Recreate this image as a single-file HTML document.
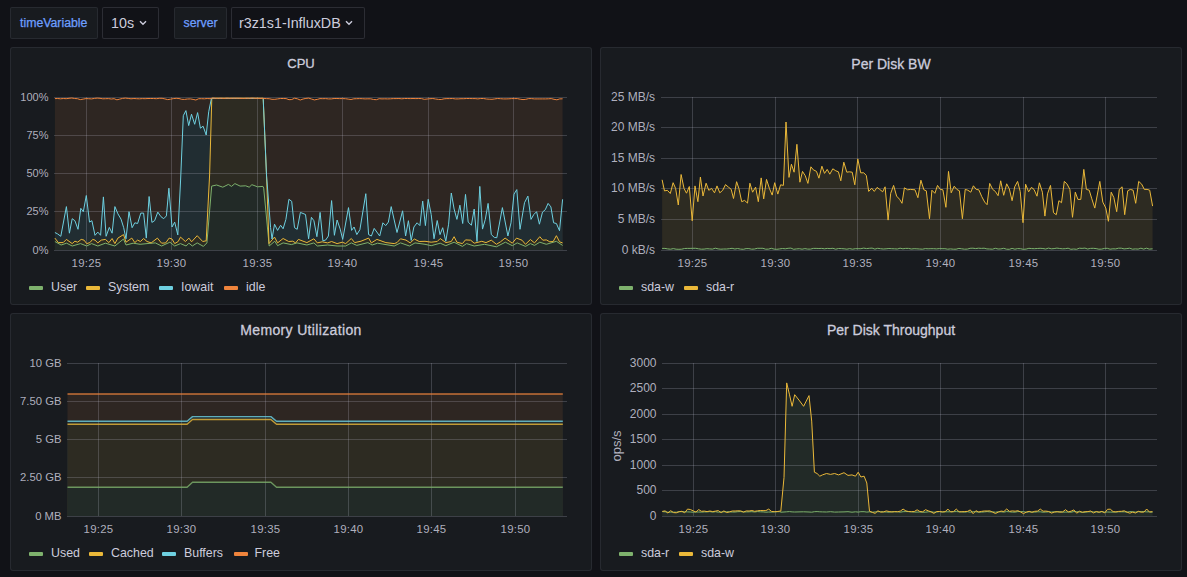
<!DOCTYPE html>
<html><head><meta charset="utf-8"><style>
html,body{margin:0;padding:0;background:#111217;width:1187px;height:577px;overflow:hidden;font-family:"Liberation Sans", sans-serif;}
.abs{position:absolute;}
.lbl{position:absolute;top:7px;height:30px;background:#181b1f;border:1px solid rgba(204,204,220,0.09);border-radius:2px;color:#6e9fff;font-weight:normal;font-size:12.3px;-webkit-text-stroke:0.25px #6e9fff;line-height:30px;box-sizing:content-box;}
.val{position:absolute;top:7px;height:30px;background:#111217;border:1px solid rgba(204,204,220,0.15);border-radius:2px;color:#ccccdc;font-size:14.3px;line-height:30px;}
.panel{position:absolute;background:#181b1f;border:1px solid rgba(204,204,220,0.09);border-radius:3px;box-sizing:border-box;}
.title{position:absolute;color:#ccccdc;font-weight:normal;font-size:14px;-webkit-text-stroke:0.3px #ccccdc;line-height:16px;text-align:center;white-space:nowrap;}
.yl{position:absolute;color:rgba(204,204,220,0.85);font-size:12px;line-height:16px;text-align:right;white-space:nowrap;}
.xl{position:absolute;width:60px;color:rgba(204,204,220,0.85);font-size:11.4px;letter-spacing:0.25px;line-height:16px;text-align:center;white-space:nowrap;}
.lm{position:absolute;width:14px;height:4px;border-radius:1px;}
.lt{position:absolute;color:#ccccdc;font-size:12.4px;line-height:16px;white-space:nowrap;}
svg{position:absolute;left:0;top:0;}
.chev{position:absolute;}
</style></head><body>
<div class="lbl" style="left:10px;width:86px;"><span style="position:absolute;left:9px">timeVariable</span></div>
<div class="val" style="left:102px;width:55px;"><span style="position:absolute;left:8px">10s</span>
<svg class="chev" style="left:36px;top:12px" width="8" height="6" viewBox="0 0 8 6"><path d="M1 1.2 L4 4.2 L7 1.2" fill="none" stroke="#ccccdc" stroke-width="1.4"/></svg></div>
<div class="lbl" style="left:174px;width:51px;"><span style="position:absolute;left:8.5px">server</span></div>
<div class="val" style="left:231px;width:132px;"><span style="position:absolute;left:7px">r3z1s1-InfluxDB</span>
<svg class="chev" style="left:113px;top:12px" width="8" height="6" viewBox="0 0 8 6"><path d="M1 1.2 L4 4.2 L7 1.2" fill="none" stroke="#ccccdc" stroke-width="1.4"/></svg></div>

<div class="panel" style="left:10px;top:47px;width:582px;height:258px"></div>
<div class="panel" style="left:600px;top:47px;width:582px;height:258px"></div>
<div class="panel" style="left:10px;top:313px;width:582px;height:258px"></div>
<div class="panel" style="left:600px;top:313px;width:582px;height:258px"></div>

<div class="title" style="left:10px;width:582px;top:55.7px;font-size:13px">CPU</div>
<div class="title" style="left:600px;width:582px;top:55.7px">Per Disk BW</div>
<div class="title" style="left:10px;width:582px;top:321.7px;letter-spacing:0.35px">Memory Utilization</div>
<div class="title" style="left:600px;width:582px;top:321.7px">Per Disk Throughput</div>

<svg width="1187" height="577" viewBox="0 0 1187 577"><polygon points="54.9,250.0 54.9,98.6 57.7,98.5 60.5,98.8 63.4,98.5 66.2,98.7 69.0,98.3 71.8,98.0 74.6,98.5 77.5,98.7 80.3,99.6 83.1,99.1 85.9,98.6 88.7,98.7 91.6,98.9 94.4,98.4 97.2,98.1 100.0,98.3 102.8,98.8 105.7,98.7 108.5,98.6 111.3,99.0 114.1,98.7 116.9,99.8 119.8,99.1 122.6,98.4 125.4,98.1 128.2,98.4 131.0,98.8 133.9,98.5 136.7,98.7 139.5,98.8 142.3,98.6 145.1,98.7 148.0,98.5 150.8,98.5 153.6,98.5 156.4,98.7 159.2,98.3 162.1,98.3 164.9,98.9 167.7,99.6 170.5,99.2 173.3,98.6 176.2,98.3 179.0,98.5 181.8,99.3 184.6,99.4 187.4,99.0 190.3,98.9 193.1,99.4 195.9,100.0 198.7,98.7 201.5,98.7 204.4,98.8 207.2,98.5 210.0,98.7 212.8,98.1 215.6,98.4 218.5,98.4 221.3,98.3 224.1,98.5 226.9,98.2 229.7,98.4 232.6,98.3 235.4,98.3 238.2,98.3 241.0,98.4 243.8,98.5 246.7,98.3 249.5,98.4 252.3,98.1 255.1,98.4 257.9,98.4 260.8,98.5 263.6,98.4 266.4,98.6 269.2,98.7 272.0,99.3 274.9,99.3 277.7,98.9 280.5,98.5 283.3,98.5 286.1,98.6 289.0,99.7 291.8,99.5 294.6,98.2 297.4,98.8 300.2,100.0 303.1,99.0 305.9,98.4 308.7,98.1 311.5,99.0 314.3,99.9 317.2,99.4 320.0,98.6 322.8,98.7 325.6,98.6 328.4,98.9 331.3,98.9 334.1,98.5 336.9,98.5 339.7,98.6 342.5,98.6 345.4,98.7 348.2,99.1 351.0,99.5 353.8,98.8 356.6,98.7 359.5,98.6 362.3,98.7 365.1,98.9 367.9,98.8 370.7,98.8 373.6,99.5 376.4,99.7 379.2,98.7 382.0,98.9 384.8,98.8 387.7,98.9 390.5,98.8 393.3,98.6 396.1,98.6 398.9,98.5 401.8,98.8 404.6,98.5 407.4,98.5 410.2,98.6 413.0,98.5 415.9,98.6 418.7,98.5 421.5,98.6 424.3,99.3 427.1,99.0 430.0,98.7 432.8,98.5 435.6,99.0 438.4,99.4 441.2,99.5 444.1,98.8 446.9,98.6 449.7,98.6 452.5,98.5 455.3,98.9 458.2,98.9 461.0,98.7 463.8,98.7 466.6,98.5 469.4,98.5 472.3,98.6 475.1,98.6 477.9,98.9 480.7,98.5 483.5,98.5 486.4,99.0 489.2,99.2 492.0,99.3 494.8,98.9 497.6,98.5 500.5,98.7 503.3,98.9 506.1,98.9 508.9,98.8 511.7,98.6 514.6,98.6 517.4,98.6 520.2,99.2 523.0,99.6 525.8,99.3 528.7,98.6 531.5,98.6 534.3,98.9 537.1,98.9 539.9,98.9 542.8,98.9 545.6,98.9 548.4,98.8 551.2,98.6 554.0,99.3 556.9,99.8 559.7,98.9 562.6,98.8 562.6,250.0" fill="#2e2622"/><polygon points="54.9,250.0 54.9,232.5 57.6,233.9 60.8,236.3 66.4,206.6 69.4,233.2 72.2,218.7 74.9,220.7 78.0,229.3 80.8,208.3 83.3,211.7 86.3,195.5 89.5,222.1 91.9,220.7 95.0,235.3 97.8,232.1 100.6,235.3 103.4,196.9 106.1,236.3 109.3,227.4 112.1,233.2 114.9,206.6 117.9,213.8 121.0,219.1 123.7,227.7 126.0,238.8 129.0,211.7 132.1,227.7 134.8,222.8 137.6,223.5 140.8,213.1 143.6,213.1 146.3,238.1 149.1,196.5 151.9,222.4 154.6,220.7 157.8,212.1 160.9,216.6 163.7,218.7 166.4,215.9 168.9,188.2 172.0,227.0 174.7,222.1 177.8,234.9 180.6,180.0 183.3,115.7 185.9,110.6 188.7,125.6 191.5,114.2 194.7,124.3 197.6,112.6 200.4,128.2 203.1,126.2 206.2,135.0 208.7,111.8 211.4,98.5 263.2,98.5 266.5,175.0 270.6,227.7 272.0,239.0 274.5,224.2 277.6,230.4 280.6,225.2 283.1,228.8 285.9,219.4 288.9,199.3 291.7,201.3 294.5,227.7 297.2,229.3 300.4,212.4 305.5,214.5 308.6,238.8 311.4,217.3 313.9,220.7 316.9,236.7 320.1,212.4 322.9,240.8 325.6,240.1 328.4,236.0 331.6,200.6 334.4,235.3 337.1,220.0 340.2,229.1 342.7,239.4 348.5,207.6 351.6,230.4 354.1,227.0 356.8,234.6 359.9,229.7 365.8,193.7 368.6,234.6 371.4,236.0 374.2,228.4 379.7,236.0 382.9,222.8 385.7,225.6 388.4,222.1 391.2,206.6 397.0,232.5 402.6,210.8 405.6,236.0 408.4,220.7 411.2,240.4 413.9,227.0 417.1,222.8 419.9,225.6 422.7,201.1 425.4,225.6 428.2,199.3 431.2,214.5 434.0,238.8 437.2,220.5 440.0,234.6 442.7,227.7 445.8,241.3 448.6,224.2 451.3,193.0 454.1,209.0 456.9,219.4 459.9,205.2 462.7,223.5 465.5,194.4 468.2,222.1 471.4,225.2 474.2,209.0 477.0,241.5 479.8,186.4 482.5,229.1 485.3,219.4 488.1,203.4 491.3,234.6 494.3,237.4 496.8,237.7 502.4,207.6 507.9,236.0 511.0,222.8 514.0,194.1 516.8,189.6 520.0,229.3 524.5,202.7 527.9,196.1 531.0,219.4 533.8,214.5 536.6,211.7 539.4,224.2 542.5,212.1 545.3,209.7 548.1,203.4 550.9,206.9 553.6,222.8 556.4,223.5 559.5,230.7 562.6,199.3 562.6,250.0" fill="#212d32"/><polygon points="54.9,250.0 54.9,238.1 58.3,242.6 63.2,242.6 66.4,239.4 72.2,243.6 74.9,241.2 77.7,242.2 81.2,239.4 84.0,240.1 86.7,243.6 89.9,242.6 92.7,239.4 95.0,240.1 97.8,242.9 101.3,240.1 105.4,239.4 108.9,242.6 112.1,238.5 114.9,243.6 117.9,238.1 123.5,234.6 126.0,242.2 131.8,238.1 134.8,242.6 137.6,240.1 140.4,241.5 143.6,238.5 147.0,241.5 151.2,242.9 157.4,238.1 161.6,243.2 165.7,242.9 169.2,238.1 172.0,239.0 174.7,243.6 178.2,241.5 180.5,237.1 185.4,241.5 188.9,238.1 191.6,241.8 197.2,235.7 202.7,241.5 206.2,240.8 209.6,175.0 211.8,98.2 263.2,98.2 266.5,175.0 269.0,243.6 274.5,237.1 277.6,242.9 283.1,238.5 288.7,241.5 292.8,241.2 295.6,242.9 298.4,239.4 306.9,242.6 313.9,238.8 317.3,242.9 322.2,241.8 327.7,242.9 331.6,241.5 337.1,243.6 342.3,242.2 345.7,243.6 351.3,238.5 354.7,242.6 361.0,241.2 368.6,238.1 371.4,242.9 376.9,239.4 385.9,242.6 394.2,243.6 397.0,242.6 400.5,238.8 406.0,240.1 410.2,242.9 414.3,239.0 419.2,241.5 425.0,241.3 431.2,242.2 437.2,241.5 440.2,238.5 445.8,242.6 451.3,241.5 454.1,236.7 456.9,242.2 462.4,243.6 465.5,239.9 470.7,240.2 474.2,243.2 481.8,241.3 486.0,242.6 491.3,240.2 496.4,244.3 500.5,241.8 505.1,238.1 512.3,243.2 516.5,238.1 522.0,240.2 525.5,244.3 530.4,239.5 534.5,242.9 539.8,236.7 542.8,240.2 546.3,239.9 549.8,241.8 553.2,241.5 556.4,235.7 559.5,241.8 562.6,242.9 562.6,250.0" fill="#2d2b22"/><polygon points="54.9,250.0 54.9,241.5 61.1,245.0 66.6,243.2 72.2,246.0 80.5,243.6 86.7,246.0 91.6,243.6 97.8,246.0 105.4,243.2 114.9,246.0 123.5,239.0 126.0,245.0 133.2,243.2 140.1,244.3 147.0,243.6 155.3,242.9 161.6,246.0 169.9,242.2 174.7,246.0 180.5,243.6 186.1,246.0 188.9,243.2 192.3,246.0 197.2,242.9 203.4,246.4 206.9,242.9 211.7,186.1 216.6,185.0 222.8,187.2 228.4,184.4 231.5,186.4 234.9,183.6 240.1,186.1 245.7,185.8 249.2,187.2 251.9,184.7 257.5,186.8 263.0,186.4 263.7,188.2 269.2,246.0 274.8,241.2 277.6,245.7 283.1,242.9 291.4,244.6 297.0,242.9 306.9,245.0 313.9,242.9 317.3,246.0 327.7,245.0 337.1,246.0 345.7,246.0 351.3,242.9 356.8,245.4 367.9,242.6 372.1,245.0 377.6,243.2 394.2,246.0 400.5,242.9 409.5,246.0 415.0,242.9 425.0,244.3 431.2,245.7 440.2,243.2 445.8,245.7 454.1,242.2 462.4,246.4 466.6,243.6 474.2,246.0 484.6,244.3 496.4,246.8 505.4,242.2 512.3,245.7 517.2,242.9 525.5,246.4 530.4,243.6 534.5,245.4 539.8,242.2 546.3,244.3 556.4,241.3 562.6,245.4 562.6,250.0" fill="#222a27"/><line x1="54" y1="97.5" x2="567" y2="97.5" stroke="rgba(204,204,220,0.21)" stroke-width="1"/><line x1="54" y1="135.5" x2="567" y2="135.5" stroke="rgba(204,204,220,0.21)" stroke-width="1"/><line x1="54" y1="173.5" x2="567" y2="173.5" stroke="rgba(204,204,220,0.21)" stroke-width="1"/><line x1="54" y1="211.5" x2="567" y2="211.5" stroke="rgba(204,204,220,0.21)" stroke-width="1"/><line x1="54" y1="250.5" x2="567" y2="250.5" stroke="rgba(204,204,220,0.21)" stroke-width="1"/><line x1="86.5" y1="97" x2="86.5" y2="250" stroke="rgba(204,204,220,0.21)" stroke-width="1"/><line x1="171.5" y1="97" x2="171.5" y2="250" stroke="rgba(204,204,220,0.21)" stroke-width="1"/><line x1="257.5" y1="97" x2="257.5" y2="250" stroke="rgba(204,204,220,0.21)" stroke-width="1"/><line x1="342.5" y1="97" x2="342.5" y2="250" stroke="rgba(204,204,220,0.21)" stroke-width="1"/><line x1="428.5" y1="97" x2="428.5" y2="250" stroke="rgba(204,204,220,0.21)" stroke-width="1"/><line x1="513.5" y1="97" x2="513.5" y2="250" stroke="rgba(204,204,220,0.21)" stroke-width="1"/><polyline points="54.9,241.5 61.1,245.0 66.6,243.2 72.2,246.0 80.5,243.6 86.7,246.0 91.6,243.6 97.8,246.0 105.4,243.2 114.9,246.0 123.5,239.0 126.0,245.0 133.2,243.2 140.1,244.3 147.0,243.6 155.3,242.9 161.6,246.0 169.9,242.2 174.7,246.0 180.5,243.6 186.1,246.0 188.9,243.2 192.3,246.0 197.2,242.9 203.4,246.4 206.9,242.9 211.7,186.1 216.6,185.0 222.8,187.2 228.4,184.4 231.5,186.4 234.9,183.6 240.1,186.1 245.7,185.8 249.2,187.2 251.9,184.7 257.5,186.8 263.0,186.4 263.7,188.2 269.2,246.0 274.8,241.2 277.6,245.7 283.1,242.9 291.4,244.6 297.0,242.9 306.9,245.0 313.9,242.9 317.3,246.0 327.7,245.0 337.1,246.0 345.7,246.0 351.3,242.9 356.8,245.4 367.9,242.6 372.1,245.0 377.6,243.2 394.2,246.0 400.5,242.9 409.5,246.0 415.0,242.9 425.0,244.3 431.2,245.7 440.2,243.2 445.8,245.7 454.1,242.2 462.4,246.4 466.6,243.6 474.2,246.0 484.6,244.3 496.4,246.8 505.4,242.2 512.3,245.7 517.2,242.9 525.5,246.4 530.4,243.6 534.5,245.4 539.8,242.2 546.3,244.3 556.4,241.3 562.6,245.4" fill="none" stroke="#7eb26d" stroke-width="1.0" stroke-opacity="1" stroke-linejoin="round"/><polyline points="54.9,238.1 58.3,242.6 63.2,242.6 66.4,239.4 72.2,243.6 74.9,241.2 77.7,242.2 81.2,239.4 84.0,240.1 86.7,243.6 89.9,242.6 92.7,239.4 95.0,240.1 97.8,242.9 101.3,240.1 105.4,239.4 108.9,242.6 112.1,238.5 114.9,243.6 117.9,238.1 123.5,234.6 126.0,242.2 131.8,238.1 134.8,242.6 137.6,240.1 140.4,241.5 143.6,238.5 147.0,241.5 151.2,242.9 157.4,238.1 161.6,243.2 165.7,242.9 169.2,238.1 172.0,239.0 174.7,243.6 178.2,241.5 180.5,237.1 185.4,241.5 188.9,238.1 191.6,241.8 197.2,235.7 202.7,241.5 206.2,240.8 209.6,175.0 211.8,98.2 263.2,98.2 266.5,175.0 269.0,243.6 274.5,237.1 277.6,242.9 283.1,238.5 288.7,241.5 292.8,241.2 295.6,242.9 298.4,239.4 306.9,242.6 313.9,238.8 317.3,242.9 322.2,241.8 327.7,242.9 331.6,241.5 337.1,243.6 342.3,242.2 345.7,243.6 351.3,238.5 354.7,242.6 361.0,241.2 368.6,238.1 371.4,242.9 376.9,239.4 385.9,242.6 394.2,243.6 397.0,242.6 400.5,238.8 406.0,240.1 410.2,242.9 414.3,239.0 419.2,241.5 425.0,241.3 431.2,242.2 437.2,241.5 440.2,238.5 445.8,242.6 451.3,241.5 454.1,236.7 456.9,242.2 462.4,243.6 465.5,239.9 470.7,240.2 474.2,243.2 481.8,241.3 486.0,242.6 491.3,240.2 496.4,244.3 500.5,241.8 505.1,238.1 512.3,243.2 516.5,238.1 522.0,240.2 525.5,244.3 530.4,239.5 534.5,242.9 539.8,236.7 542.8,240.2 546.3,239.9 549.8,241.8 553.2,241.5 556.4,235.7 559.5,241.8 562.6,242.9" fill="none" stroke="#eab839" stroke-width="1.0" stroke-opacity="1" stroke-linejoin="round"/><polyline points="54.9,232.5 57.6,233.9 60.8,236.3 66.4,206.6 69.4,233.2 72.2,218.7 74.9,220.7 78.0,229.3 80.8,208.3 83.3,211.7 86.3,195.5 89.5,222.1 91.9,220.7 95.0,235.3 97.8,232.1 100.6,235.3 103.4,196.9 106.1,236.3 109.3,227.4 112.1,233.2 114.9,206.6 117.9,213.8 121.0,219.1 123.7,227.7 126.0,238.8 129.0,211.7 132.1,227.7 134.8,222.8 137.6,223.5 140.8,213.1 143.6,213.1 146.3,238.1 149.1,196.5 151.9,222.4 154.6,220.7 157.8,212.1 160.9,216.6 163.7,218.7 166.4,215.9 168.9,188.2 172.0,227.0 174.7,222.1 177.8,234.9 180.6,180.0 183.3,115.7 185.9,110.6 188.7,125.6 191.5,114.2 194.7,124.3 197.6,112.6 200.4,128.2 203.1,126.2 206.2,135.0 208.7,111.8 211.4,98.5 263.2,98.5 266.5,175.0 270.6,227.7 272.0,239.0 274.5,224.2 277.6,230.4 280.6,225.2 283.1,228.8 285.9,219.4 288.9,199.3 291.7,201.3 294.5,227.7 297.2,229.3 300.4,212.4 305.5,214.5 308.6,238.8 311.4,217.3 313.9,220.7 316.9,236.7 320.1,212.4 322.9,240.8 325.6,240.1 328.4,236.0 331.6,200.6 334.4,235.3 337.1,220.0 340.2,229.1 342.7,239.4 348.5,207.6 351.6,230.4 354.1,227.0 356.8,234.6 359.9,229.7 365.8,193.7 368.6,234.6 371.4,236.0 374.2,228.4 379.7,236.0 382.9,222.8 385.7,225.6 388.4,222.1 391.2,206.6 397.0,232.5 402.6,210.8 405.6,236.0 408.4,220.7 411.2,240.4 413.9,227.0 417.1,222.8 419.9,225.6 422.7,201.1 425.4,225.6 428.2,199.3 431.2,214.5 434.0,238.8 437.2,220.5 440.0,234.6 442.7,227.7 445.8,241.3 448.6,224.2 451.3,193.0 454.1,209.0 456.9,219.4 459.9,205.2 462.7,223.5 465.5,194.4 468.2,222.1 471.4,225.2 474.2,209.0 477.0,241.5 479.8,186.4 482.5,229.1 485.3,219.4 488.1,203.4 491.3,234.6 494.3,237.4 496.8,237.7 502.4,207.6 507.9,236.0 511.0,222.8 514.0,194.1 516.8,189.6 520.0,229.3 524.5,202.7 527.9,196.1 531.0,219.4 533.8,214.5 536.6,211.7 539.4,224.2 542.5,212.1 545.3,209.7 548.1,203.4 550.9,206.9 553.6,222.8 556.4,223.5 559.5,230.7 562.6,199.3" fill="none" stroke="#6ed0e0" stroke-width="1.0" stroke-opacity="1" stroke-linejoin="round"/><polyline points="54.9,98.6 57.7,98.5 60.5,98.8 63.4,98.5 66.2,98.7 69.0,98.3 71.8,98.0 74.6,98.5 77.5,98.7 80.3,99.6 83.1,99.1 85.9,98.6 88.7,98.7 91.6,98.9 94.4,98.4 97.2,98.1 100.0,98.3 102.8,98.8 105.7,98.7 108.5,98.6 111.3,99.0 114.1,98.7 116.9,99.8 119.8,99.1 122.6,98.4 125.4,98.1 128.2,98.4 131.0,98.8 133.9,98.5 136.7,98.7 139.5,98.8 142.3,98.6 145.1,98.7 148.0,98.5 150.8,98.5 153.6,98.5 156.4,98.7 159.2,98.3 162.1,98.3 164.9,98.9 167.7,99.6 170.5,99.2 173.3,98.6 176.2,98.3 179.0,98.5 181.8,99.3 184.6,99.4 187.4,99.0 190.3,98.9 193.1,99.4 195.9,100.0 198.7,98.7 201.5,98.7 204.4,98.8 207.2,98.5 210.0,98.7 212.8,98.1 215.6,98.4 218.5,98.4 221.3,98.3 224.1,98.5 226.9,98.2 229.7,98.4 232.6,98.3 235.4,98.3 238.2,98.3 241.0,98.4 243.8,98.5 246.7,98.3 249.5,98.4 252.3,98.1 255.1,98.4 257.9,98.4 260.8,98.5 263.6,98.4 266.4,98.6 269.2,98.7 272.0,99.3 274.9,99.3 277.7,98.9 280.5,98.5 283.3,98.5 286.1,98.6 289.0,99.7 291.8,99.5 294.6,98.2 297.4,98.8 300.2,100.0 303.1,99.0 305.9,98.4 308.7,98.1 311.5,99.0 314.3,99.9 317.2,99.4 320.0,98.6 322.8,98.7 325.6,98.6 328.4,98.9 331.3,98.9 334.1,98.5 336.9,98.5 339.7,98.6 342.5,98.6 345.4,98.7 348.2,99.1 351.0,99.5 353.8,98.8 356.6,98.7 359.5,98.6 362.3,98.7 365.1,98.9 367.9,98.8 370.7,98.8 373.6,99.5 376.4,99.7 379.2,98.7 382.0,98.9 384.8,98.8 387.7,98.9 390.5,98.8 393.3,98.6 396.1,98.6 398.9,98.5 401.8,98.8 404.6,98.5 407.4,98.5 410.2,98.6 413.0,98.5 415.9,98.6 418.7,98.5 421.5,98.6 424.3,99.3 427.1,99.0 430.0,98.7 432.8,98.5 435.6,99.0 438.4,99.4 441.2,99.5 444.1,98.8 446.9,98.6 449.7,98.6 452.5,98.5 455.3,98.9 458.2,98.9 461.0,98.7 463.8,98.7 466.6,98.5 469.4,98.5 472.3,98.6 475.1,98.6 477.9,98.9 480.7,98.5 483.5,98.5 486.4,99.0 489.2,99.2 492.0,99.3 494.8,98.9 497.6,98.5 500.5,98.7 503.3,98.9 506.1,98.9 508.9,98.8 511.7,98.6 514.6,98.6 517.4,98.6 520.2,99.2 523.0,99.6 525.8,99.3 528.7,98.6 531.5,98.6 534.3,98.9 537.1,98.9 539.9,98.9 542.8,98.9 545.6,98.9 548.4,98.8 551.2,98.6 554.0,99.3 556.9,99.8 559.7,98.9 562.6,98.8" fill="none" stroke="#ef843c" stroke-width="1.0" stroke-opacity="1" stroke-linejoin="round"/><polygon points="662.1,250.0 662.1,179.8 664.5,190.9 667.4,190.3 670.3,193.5 673.1,182.7 675.6,188.4 678.3,205.0 681.1,174.5 684.0,188.4 686.5,193.2 689.3,186.5 692.2,220.8 695.0,185.9 697.9,201.7 700.4,177.0 703.0,196.0 706.1,183.2 708.8,190.3 711.6,188.4 714.5,192.8 717.0,185.9 719.8,192.8 722.7,190.3 725.5,184.6 728.4,187.1 731.2,189.3 733.5,198.5 736.6,181.7 738.9,188.4 741.7,201.7 744.6,200.4 747.5,203.1 749.9,183.2 752.6,192.2 755.6,187.1 758.3,201.7 761.2,177.9 763.7,198.9 766.5,179.4 769.4,188.4 772.2,195.1 774.7,182.7 777.8,194.1 780.6,184.8 783.4,185.4 786.0,122.0 789.0,177.4 791.4,164.2 794.1,172.2 796.9,144.3 799.9,182.2 802.5,171.4 805.3,175.8 807.9,183.4 810.9,166.8 813.3,169.8 816.5,171.4 818.9,178.2 821.9,166.2 824.5,173.4 827.2,169.4 829.8,174.2 832.8,168.8 835.8,170.8 838.4,171.8 840.8,180.8 843.8,162.2 846.8,172.2 849.2,171.8 852.2,172.2 854.8,184.8 857.8,158.9 860.7,172.8 863.7,172.8 866.3,175.4 868.7,191.4 871.7,188.2 874.3,191.4 877.1,187.4 879.7,189.4 882.7,191.8 885.1,186.8 888.1,220.1 890.7,193.3 893.6,185.4 896.6,196.1 899.6,199.3 902.0,203.3 904.4,187.8 907.6,189.8 910.4,189.4 915.0,189.8 917.9,197.7 920.9,180.2 923.9,189.8 926.3,190.8 929.5,218.7 931.9,190.2 934.9,193.3 937.5,185.4 940.3,189.4 942.9,189.8 945.9,207.3 948.5,171.4 951.2,192.8 954.2,186.2 956.8,189.4 959.4,190.8 962.4,218.7 965.2,189.4 967.8,190.2 970.8,192.2 973.4,185.8 976.2,189.4 978.8,189.8 981.8,196.7 984.7,202.1 987.1,204.7 989.7,183.4 992.7,189.4 995.3,191.4 998.1,195.7 1000.7,180.8 1003.7,195.3 1006.7,183.8 1009.3,188.8 1012.1,200.7 1014.7,186.8 1017.6,181.4 1020.2,191.4 1023.0,222.7 1025.6,184.2 1028.6,191.8 1031.4,187.4 1034.0,189.4 1037.0,196.2 1039.4,182.8 1042.4,192.2 1044.9,216.1 1047.5,193.8 1050.5,185.4 1053.5,212.7 1056.3,214.7 1058.9,200.7 1061.5,202.7 1064.3,181.4 1066.9,183.8 1069.9,189.4 1072.5,217.3 1075.3,192.2 1077.9,199.4 1080.8,199.4 1083.8,169.4 1086.4,189.4 1089.2,190.2 1091.8,198.8 1094.8,208.1 1099.8,181.4 1102.8,202.1 1105.8,208.1 1108.4,221.3 1111.2,192.2 1113.8,197.4 1116.7,211.7 1119.3,189.4 1122.1,186.8 1124.7,214.7 1127.7,190.8 1130.3,189.4 1133.1,190.2 1135.7,203.3 1138.7,181.4 1141.7,184.2 1144.3,189.4 1147.1,189.4 1149.7,190.2 1152.6,206.1 1152.6,250.0" fill="#2d2b22"/><polygon points="662.1,250.0 662.1,248.4 664.9,248.4 667.7,248.9 670.5,249.2 673.3,248.6 676.1,249.2 678.9,249.3 681.7,249.2 684.5,248.5 687.3,248.4 690.1,248.4 692.9,248.3 695.7,248.3 698.5,248.8 701.3,249.2 704.1,249.1 706.9,248.7 709.7,248.9 712.5,249.1 715.3,248.2 718.1,248.9 720.9,249.2 723.7,249.0 726.5,249.0 729.3,248.7 732.1,248.3 734.9,249.0 737.7,248.5 740.5,249.1 743.3,249.3 746.1,248.6 748.9,248.6 751.7,249.2 754.5,249.0 757.3,248.3 760.1,248.3 762.9,248.3 765.7,249.2 768.5,249.1 771.3,248.3 774.1,249.1 776.9,249.3 779.7,248.9 782.5,248.5 785.3,248.8 788.1,248.3 790.9,248.1 793.7,249.3 796.5,248.9 799.3,248.7 802.1,249.2 804.9,248.6 807.7,249.1 810.5,249.1 813.3,248.4 816.1,248.4 818.9,248.5 821.7,248.4 824.5,248.8 827.3,248.4 830.1,248.6 832.9,248.3 835.7,249.2 838.5,248.5 841.3,248.6 844.1,248.8 846.9,249.2 849.7,248.6 852.5,249.2 855.3,248.7 858.1,248.7 860.9,248.7 863.7,248.1 866.5,248.6 869.3,248.3 872.1,248.1 874.9,249.1 877.7,248.3 880.5,248.7 883.3,249.0 886.1,248.8 888.9,248.5 891.7,248.7 894.5,248.8 897.3,249.0 900.1,248.2 902.9,248.8 905.7,248.4 908.5,248.4 911.3,249.0 914.1,248.7 916.9,248.8 919.7,249.0 922.5,249.2 925.3,248.6 928.1,248.8 930.9,248.7 933.7,248.7 936.5,248.9 939.3,248.6 942.1,248.7 944.9,248.7 947.7,249.2 950.5,248.9 953.3,249.2 956.1,249.2 958.9,248.4 961.7,248.8 964.5,249.2 967.3,249.1 970.1,248.3 972.9,248.2 975.7,248.6 978.5,248.2 981.3,248.4 984.1,248.2 986.9,248.9 989.7,249.0 992.5,249.2 995.3,248.3 998.1,249.0 1000.9,248.9 1003.7,248.3 1006.5,249.2 1009.3,249.3 1012.1,248.4 1014.9,249.2 1017.7,248.6 1020.5,248.7 1023.3,249.3 1026.1,249.1 1028.9,248.3 1031.7,248.6 1034.5,248.7 1037.3,248.5 1040.1,248.3 1042.9,248.5 1045.7,249.0 1048.5,248.1 1051.3,248.8 1054.1,248.6 1056.9,248.1 1059.7,248.5 1062.5,248.8 1065.3,248.7 1068.1,248.2 1070.9,249.3 1073.7,249.0 1076.5,249.3 1079.3,248.2 1082.1,248.4 1084.9,248.1 1087.7,249.0 1090.5,248.4 1093.3,248.3 1096.1,248.6 1098.9,249.2 1101.7,249.1 1104.5,248.4 1107.3,248.3 1110.1,249.2 1112.9,248.8 1115.7,248.9 1118.5,248.2 1121.3,248.2 1124.1,248.9 1126.9,248.6 1129.7,248.2 1132.5,249.2 1135.3,248.9 1138.1,249.1 1140.9,248.2 1143.7,249.1 1146.5,248.2 1149.3,249.1 1152.6,248.8 1152.6,250.0" fill="#222a27"/><line x1="661" y1="97.5" x2="1157" y2="97.5" stroke="rgba(204,204,220,0.21)" stroke-width="1"/><line x1="661" y1="127.5" x2="1157" y2="127.5" stroke="rgba(204,204,220,0.21)" stroke-width="1"/><line x1="661" y1="158.5" x2="1157" y2="158.5" stroke="rgba(204,204,220,0.21)" stroke-width="1"/><line x1="661" y1="188.5" x2="1157" y2="188.5" stroke="rgba(204,204,220,0.21)" stroke-width="1"/><line x1="661" y1="219.5" x2="1157" y2="219.5" stroke="rgba(204,204,220,0.21)" stroke-width="1"/><line x1="661" y1="250.5" x2="1157" y2="250.5" stroke="rgba(204,204,220,0.21)" stroke-width="1"/><line x1="692.5" y1="97" x2="692.5" y2="250" stroke="rgba(204,204,220,0.21)" stroke-width="1"/><line x1="775.5" y1="97" x2="775.5" y2="250" stroke="rgba(204,204,220,0.21)" stroke-width="1"/><line x1="857.5" y1="97" x2="857.5" y2="250" stroke="rgba(204,204,220,0.21)" stroke-width="1"/><line x1="940.5" y1="97" x2="940.5" y2="250" stroke="rgba(204,204,220,0.21)" stroke-width="1"/><line x1="1023.5" y1="97" x2="1023.5" y2="250" stroke="rgba(204,204,220,0.21)" stroke-width="1"/><line x1="1105.5" y1="97" x2="1105.5" y2="250" stroke="rgba(204,204,220,0.21)" stroke-width="1"/><polyline points="662.1,248.4 664.9,248.4 667.7,248.9 670.5,249.2 673.3,248.6 676.1,249.2 678.9,249.3 681.7,249.2 684.5,248.5 687.3,248.4 690.1,248.4 692.9,248.3 695.7,248.3 698.5,248.8 701.3,249.2 704.1,249.1 706.9,248.7 709.7,248.9 712.5,249.1 715.3,248.2 718.1,248.9 720.9,249.2 723.7,249.0 726.5,249.0 729.3,248.7 732.1,248.3 734.9,249.0 737.7,248.5 740.5,249.1 743.3,249.3 746.1,248.6 748.9,248.6 751.7,249.2 754.5,249.0 757.3,248.3 760.1,248.3 762.9,248.3 765.7,249.2 768.5,249.1 771.3,248.3 774.1,249.1 776.9,249.3 779.7,248.9 782.5,248.5 785.3,248.8 788.1,248.3 790.9,248.1 793.7,249.3 796.5,248.9 799.3,248.7 802.1,249.2 804.9,248.6 807.7,249.1 810.5,249.1 813.3,248.4 816.1,248.4 818.9,248.5 821.7,248.4 824.5,248.8 827.3,248.4 830.1,248.6 832.9,248.3 835.7,249.2 838.5,248.5 841.3,248.6 844.1,248.8 846.9,249.2 849.7,248.6 852.5,249.2 855.3,248.7 858.1,248.7 860.9,248.7 863.7,248.1 866.5,248.6 869.3,248.3 872.1,248.1 874.9,249.1 877.7,248.3 880.5,248.7 883.3,249.0 886.1,248.8 888.9,248.5 891.7,248.7 894.5,248.8 897.3,249.0 900.1,248.2 902.9,248.8 905.7,248.4 908.5,248.4 911.3,249.0 914.1,248.7 916.9,248.8 919.7,249.0 922.5,249.2 925.3,248.6 928.1,248.8 930.9,248.7 933.7,248.7 936.5,248.9 939.3,248.6 942.1,248.7 944.9,248.7 947.7,249.2 950.5,248.9 953.3,249.2 956.1,249.2 958.9,248.4 961.7,248.8 964.5,249.2 967.3,249.1 970.1,248.3 972.9,248.2 975.7,248.6 978.5,248.2 981.3,248.4 984.1,248.2 986.9,248.9 989.7,249.0 992.5,249.2 995.3,248.3 998.1,249.0 1000.9,248.9 1003.7,248.3 1006.5,249.2 1009.3,249.3 1012.1,248.4 1014.9,249.2 1017.7,248.6 1020.5,248.7 1023.3,249.3 1026.1,249.1 1028.9,248.3 1031.7,248.6 1034.5,248.7 1037.3,248.5 1040.1,248.3 1042.9,248.5 1045.7,249.0 1048.5,248.1 1051.3,248.8 1054.1,248.6 1056.9,248.1 1059.7,248.5 1062.5,248.8 1065.3,248.7 1068.1,248.2 1070.9,249.3 1073.7,249.0 1076.5,249.3 1079.3,248.2 1082.1,248.4 1084.9,248.1 1087.7,249.0 1090.5,248.4 1093.3,248.3 1096.1,248.6 1098.9,249.2 1101.7,249.1 1104.5,248.4 1107.3,248.3 1110.1,249.2 1112.9,248.8 1115.7,248.9 1118.5,248.2 1121.3,248.2 1124.1,248.9 1126.9,248.6 1129.7,248.2 1132.5,249.2 1135.3,248.9 1138.1,249.1 1140.9,248.2 1143.7,249.1 1146.5,248.2 1149.3,249.1 1152.6,248.8" fill="none" stroke="#7eb26d" stroke-width="1.0" stroke-opacity="1" stroke-linejoin="round"/><polyline points="662.1,179.8 664.5,190.9 667.4,190.3 670.3,193.5 673.1,182.7 675.6,188.4 678.3,205.0 681.1,174.5 684.0,188.4 686.5,193.2 689.3,186.5 692.2,220.8 695.0,185.9 697.9,201.7 700.4,177.0 703.0,196.0 706.1,183.2 708.8,190.3 711.6,188.4 714.5,192.8 717.0,185.9 719.8,192.8 722.7,190.3 725.5,184.6 728.4,187.1 731.2,189.3 733.5,198.5 736.6,181.7 738.9,188.4 741.7,201.7 744.6,200.4 747.5,203.1 749.9,183.2 752.6,192.2 755.6,187.1 758.3,201.7 761.2,177.9 763.7,198.9 766.5,179.4 769.4,188.4 772.2,195.1 774.7,182.7 777.8,194.1 780.6,184.8 783.4,185.4 786.0,122.0 789.0,177.4 791.4,164.2 794.1,172.2 796.9,144.3 799.9,182.2 802.5,171.4 805.3,175.8 807.9,183.4 810.9,166.8 813.3,169.8 816.5,171.4 818.9,178.2 821.9,166.2 824.5,173.4 827.2,169.4 829.8,174.2 832.8,168.8 835.8,170.8 838.4,171.8 840.8,180.8 843.8,162.2 846.8,172.2 849.2,171.8 852.2,172.2 854.8,184.8 857.8,158.9 860.7,172.8 863.7,172.8 866.3,175.4 868.7,191.4 871.7,188.2 874.3,191.4 877.1,187.4 879.7,189.4 882.7,191.8 885.1,186.8 888.1,220.1 890.7,193.3 893.6,185.4 896.6,196.1 899.6,199.3 902.0,203.3 904.4,187.8 907.6,189.8 910.4,189.4 915.0,189.8 917.9,197.7 920.9,180.2 923.9,189.8 926.3,190.8 929.5,218.7 931.9,190.2 934.9,193.3 937.5,185.4 940.3,189.4 942.9,189.8 945.9,207.3 948.5,171.4 951.2,192.8 954.2,186.2 956.8,189.4 959.4,190.8 962.4,218.7 965.2,189.4 967.8,190.2 970.8,192.2 973.4,185.8 976.2,189.4 978.8,189.8 981.8,196.7 984.7,202.1 987.1,204.7 989.7,183.4 992.7,189.4 995.3,191.4 998.1,195.7 1000.7,180.8 1003.7,195.3 1006.7,183.8 1009.3,188.8 1012.1,200.7 1014.7,186.8 1017.6,181.4 1020.2,191.4 1023.0,222.7 1025.6,184.2 1028.6,191.8 1031.4,187.4 1034.0,189.4 1037.0,196.2 1039.4,182.8 1042.4,192.2 1044.9,216.1 1047.5,193.8 1050.5,185.4 1053.5,212.7 1056.3,214.7 1058.9,200.7 1061.5,202.7 1064.3,181.4 1066.9,183.8 1069.9,189.4 1072.5,217.3 1075.3,192.2 1077.9,199.4 1080.8,199.4 1083.8,169.4 1086.4,189.4 1089.2,190.2 1091.8,198.8 1094.8,208.1 1099.8,181.4 1102.8,202.1 1105.8,208.1 1108.4,221.3 1111.2,192.2 1113.8,197.4 1116.7,211.7 1119.3,189.4 1122.1,186.8 1124.7,214.7 1127.7,190.8 1130.3,189.4 1133.1,190.2 1135.7,203.3 1138.7,181.4 1141.7,184.2 1144.3,189.4 1147.1,189.4 1149.7,190.2 1152.6,206.1" fill="none" stroke="#eab839" stroke-width="1.0" stroke-opacity="1" stroke-linejoin="round"/><polygon points="67.5,516.0 67.5,394.0 562.8,394.0 562.8,516.0" fill="#2e2622"/><polygon points="67.5,516.0 67.5,421.3 187.1,421.3 192.5,416.6 270.9,416.6 276.5,421.3 562.8,421.3 562.8,516.0" fill="#212d32"/><polygon points="67.5,516.0 67.5,424.2 187.1,424.2 192.5,419.5 270.9,419.5 276.5,424.2 562.8,424.2 562.8,516.0" fill="#2d2b22"/><polygon points="67.5,516.0 67.5,487.2 187.1,487.2 192.5,482.3 270.9,482.3 276.5,487.2 562.8,487.2 562.8,516.0" fill="#222a27"/><line x1="67" y1="363.5" x2="567" y2="363.5" stroke="rgba(204,204,220,0.21)" stroke-width="1"/><line x1="67" y1="401.5" x2="567" y2="401.5" stroke="rgba(204,204,220,0.21)" stroke-width="1"/><line x1="67" y1="439.5" x2="567" y2="439.5" stroke="rgba(204,204,220,0.21)" stroke-width="1"/><line x1="67" y1="477.5" x2="567" y2="477.5" stroke="rgba(204,204,220,0.21)" stroke-width="1"/><line x1="67" y1="516.5" x2="567" y2="516.5" stroke="rgba(204,204,220,0.21)" stroke-width="1"/><line x1="98.5" y1="363" x2="98.5" y2="516" stroke="rgba(204,204,220,0.21)" stroke-width="1"/><line x1="181.5" y1="363" x2="181.5" y2="516" stroke="rgba(204,204,220,0.21)" stroke-width="1"/><line x1="265.5" y1="363" x2="265.5" y2="516" stroke="rgba(204,204,220,0.21)" stroke-width="1"/><line x1="348.5" y1="363" x2="348.5" y2="516" stroke="rgba(204,204,220,0.21)" stroke-width="1"/><line x1="431.5" y1="363" x2="431.5" y2="516" stroke="rgba(204,204,220,0.21)" stroke-width="1"/><line x1="515.5" y1="363" x2="515.5" y2="516" stroke="rgba(204,204,220,0.21)" stroke-width="1"/><polyline points="67.5,394.0 562.8,394.0" fill="none" stroke="#ef843c" stroke-width="1.4" stroke-opacity="0.8" stroke-linejoin="round"/><polyline points="67.5,421.3 187.1,421.3 192.5,416.6 270.9,416.6 276.5,421.3 562.8,421.3" fill="none" stroke="#6ed0e0" stroke-width="1.4" stroke-opacity="0.8" stroke-linejoin="round"/><polyline points="67.5,424.2 187.1,424.2 192.5,419.5 270.9,419.5 276.5,424.2 562.8,424.2" fill="none" stroke="#eab839" stroke-width="1.4" stroke-opacity="0.8" stroke-linejoin="round"/><polyline points="67.5,487.2 187.1,487.2 192.5,482.3 270.9,482.3 276.5,487.2 562.8,487.2" fill="none" stroke="#7eb26d" stroke-width="1.4" stroke-opacity="0.8" stroke-linejoin="round"/><polygon points="662.3,516.0 662.3,511.4 665.1,510.9 667.9,513.0 670.7,510.7 673.5,512.6 676.3,512.8 679.1,511.7 681.9,511.3 684.7,512.8 687.5,509.1 690.3,509.5 693.1,510.8 695.9,512.0 698.7,509.6 701.5,511.3 704.3,511.1 707.1,511.6 709.9,511.0 712.7,511.6 715.5,511.1 718.3,510.6 721.1,512.6 723.9,510.9 726.7,512.6 729.5,511.9 732.3,511.0 735.1,511.0 737.9,510.8 740.7,510.9 743.5,512.1 746.3,510.9 749.1,511.0 751.9,510.5 754.7,511.3 757.5,510.8 760.3,510.5 763.1,510.6 765.9,510.6 768.7,509.1 771.5,511.4 774.3,511.7 777.1,511.6 779.9,511.1 780.8,511.2 784.0,477.6 786.7,382.9 789.4,394.2 792.1,406.3 794.7,394.7 799.0,400.1 803.6,406.3 809.0,395.6 811.7,421.1 814.4,472.2 817.1,473.5 819.8,476.2 822.4,474.9 826.5,473.5 830.5,474.4 834.6,473.5 838.6,474.9 844.0,472.7 848.0,475.4 852.0,474.9 855.5,476.2 858.2,472.2 860.9,477.0 864.1,476.2 866.8,483.0 869.5,511.2 872.3,512.3 875.1,513.4 877.9,510.8 880.7,512.1 883.5,511.9 886.3,510.9 889.1,511.5 891.9,512.0 894.7,511.6 897.5,511.8 900.3,511.1 903.1,509.1 905.9,510.9 908.7,511.6 911.5,511.7 914.3,511.5 917.1,509.8 919.9,511.5 922.7,511.8 925.5,509.7 928.3,510.8 931.1,511.9 933.9,513.4 936.7,511.5 939.5,511.5 942.3,511.9 945.1,511.7 947.9,509.1 950.7,511.9 953.5,511.6 956.3,509.1 959.1,511.8 961.9,511.8 964.7,511.5 967.5,511.4 970.3,509.9 973.1,513.7 975.9,510.7 978.7,512.0 981.5,511.4 984.3,511.0 987.1,511.0 989.9,510.9 992.7,512.2 995.5,513.5 998.3,512.1 1001.1,511.1 1003.9,511.5 1006.7,509.0 1009.5,511.4 1012.3,510.9 1015.1,511.2 1017.9,510.7 1020.7,512.0 1023.5,513.6 1026.3,512.1 1029.1,511.3 1031.9,512.3 1034.7,511.3 1037.5,511.1 1040.3,509.1 1043.1,511.2 1045.9,511.1 1048.7,511.5 1051.5,513.1 1054.3,512.1 1057.1,511.7 1059.9,512.2 1062.7,511.9 1065.5,509.7 1068.3,511.9 1071.1,511.2 1073.9,509.9 1076.7,513.2 1079.5,511.2 1082.3,512.3 1085.1,511.7 1087.9,511.6 1090.7,511.0 1093.5,512.9 1096.3,511.5 1099.1,512.2 1101.9,511.4 1104.7,512.9 1107.5,509.3 1110.3,509.2 1113.1,511.6 1115.9,511.9 1118.7,511.4 1121.5,511.3 1124.3,510.8 1127.1,512.2 1129.9,513.2 1132.7,512.1 1135.5,513.0 1138.3,511.3 1141.1,512.2 1143.9,512.1 1146.7,509.0 1149.5,512.1 1152.3,511.6 1152.6,511.8 1152.6,516.0" fill="#222a27"/><line x1="662" y1="363.5" x2="1157" y2="363.5" stroke="rgba(204,204,220,0.21)" stroke-width="1"/><line x1="662" y1="388.5" x2="1157" y2="388.5" stroke="rgba(204,204,220,0.21)" stroke-width="1"/><line x1="662" y1="414.5" x2="1157" y2="414.5" stroke="rgba(204,204,220,0.21)" stroke-width="1"/><line x1="662" y1="439.5" x2="1157" y2="439.5" stroke="rgba(204,204,220,0.21)" stroke-width="1"/><line x1="662" y1="465.5" x2="1157" y2="465.5" stroke="rgba(204,204,220,0.21)" stroke-width="1"/><line x1="662" y1="490.5" x2="1157" y2="490.5" stroke="rgba(204,204,220,0.21)" stroke-width="1"/><line x1="662" y1="516.5" x2="1157" y2="516.5" stroke="rgba(204,204,220,0.21)" stroke-width="1"/><line x1="693.5" y1="363" x2="693.5" y2="516" stroke="rgba(204,204,220,0.21)" stroke-width="1"/><line x1="775.5" y1="363" x2="775.5" y2="516" stroke="rgba(204,204,220,0.21)" stroke-width="1"/><line x1="858.5" y1="363" x2="858.5" y2="516" stroke="rgba(204,204,220,0.21)" stroke-width="1"/><line x1="940.5" y1="363" x2="940.5" y2="516" stroke="rgba(204,204,220,0.21)" stroke-width="1"/><line x1="1023.5" y1="363" x2="1023.5" y2="516" stroke="rgba(204,204,220,0.21)" stroke-width="1"/><line x1="1105.5" y1="363" x2="1105.5" y2="516" stroke="rgba(204,204,220,0.21)" stroke-width="1"/><polyline points="662.3,511.6 665.1,511.8 667.9,512.2 670.7,512.1 673.5,512.1 676.3,512.2 679.1,511.7 681.9,511.7 684.7,511.7 687.5,511.9 690.3,512.0 693.1,512.2 695.9,512.0 698.7,512.0 701.5,512.1 704.3,511.9 707.1,511.9 709.9,511.6 712.7,512.1 715.5,511.7 718.3,512.2 721.1,512.0 723.9,511.8 726.7,511.7 729.5,511.8 732.3,512.0 735.1,512.0 737.9,511.7 740.7,511.6 743.5,511.9 746.3,511.9 749.1,511.8 751.9,511.7 754.7,512.0 757.5,511.6 760.3,511.8 763.1,511.9 765.9,512.2 768.7,512.0 771.5,512.1 774.3,511.9 777.1,511.7 779.9,511.7 780.8,512.2 784.0,512.0 786.7,511.8 789.4,511.6 792.1,511.9 794.7,512.0 799.0,511.9 803.6,511.8 809.0,512.0 811.7,512.2 814.4,511.7 817.1,511.6 819.8,511.8 822.4,511.9 826.5,512.0 830.5,511.7 834.6,512.1 838.6,512.0 844.0,511.9 848.0,511.7 852.0,512.2 855.5,511.8 858.2,512.1 860.9,511.7 864.1,511.7 866.8,512.1 869.5,511.8 872.3,512.2 875.1,511.9 877.9,511.7 880.7,511.7 883.5,511.9 886.3,512.0 889.1,512.2 891.9,511.7 894.7,511.8 897.5,511.7 900.3,512.2 903.1,511.7 905.9,511.6 908.7,511.6 911.5,511.8 914.3,512.1 917.1,512.1 919.9,512.0 922.7,512.2 925.5,512.2 928.3,511.8 931.1,511.7 933.9,512.2 936.7,512.0 939.5,511.6 942.3,512.0 945.1,511.8 947.9,511.8 950.7,511.8 953.5,511.7 956.3,511.6 959.1,511.8 961.9,511.8 964.7,512.2 967.5,511.7 970.3,512.2 973.1,511.7 975.9,511.8 978.7,512.1 981.5,512.1 984.3,511.9 987.1,511.6 989.9,511.9 992.7,511.8 995.5,512.2 998.3,511.7 1001.1,511.8 1003.9,512.1 1006.7,511.6 1009.5,511.8 1012.3,512.1 1015.1,512.1 1017.9,511.6 1020.7,511.6 1023.5,511.6 1026.3,512.2 1029.1,511.8 1031.9,512.0 1034.7,512.1 1037.5,511.8 1040.3,511.8 1043.1,512.2 1045.9,512.0 1048.7,511.8 1051.5,512.0 1054.3,511.8 1057.1,511.8 1059.9,511.6 1062.7,512.1 1065.5,512.1 1068.3,512.0 1071.1,512.2 1073.9,511.6 1076.7,511.7 1079.5,511.9 1082.3,512.2 1085.1,512.2 1087.9,511.8 1090.7,511.8 1093.5,511.9 1096.3,511.9 1099.1,512.2 1101.9,511.7 1104.7,512.1 1107.5,512.0 1110.3,512.1 1113.1,512.1 1115.9,512.0 1118.7,511.8 1121.5,511.8 1124.3,511.8 1127.1,512.1 1129.9,511.6 1132.7,511.7 1135.5,512.1 1138.3,511.7 1141.1,511.6 1143.9,511.6 1146.7,511.9 1149.5,511.8 1152.3,512.2 1152.6,512.1" fill="none" stroke="#7eb26d" stroke-width="1.0" stroke-opacity="1" stroke-linejoin="round"/><polyline points="662.3,511.4 665.1,510.9 667.9,513.0 670.7,510.7 673.5,512.6 676.3,512.8 679.1,511.7 681.9,511.3 684.7,512.8 687.5,509.1 690.3,509.5 693.1,510.8 695.9,512.0 698.7,509.6 701.5,511.3 704.3,511.1 707.1,511.6 709.9,511.0 712.7,511.6 715.5,511.1 718.3,510.6 721.1,512.6 723.9,510.9 726.7,512.6 729.5,511.9 732.3,511.0 735.1,511.0 737.9,510.8 740.7,510.9 743.5,512.1 746.3,510.9 749.1,511.0 751.9,510.5 754.7,511.3 757.5,510.8 760.3,510.5 763.1,510.6 765.9,510.6 768.7,509.1 771.5,511.4 774.3,511.7 777.1,511.6 779.9,511.1 780.8,511.2 784.0,477.6 786.7,382.9 789.4,394.2 792.1,406.3 794.7,394.7 799.0,400.1 803.6,406.3 809.0,395.6 811.7,421.1 814.4,472.2 817.1,473.5 819.8,476.2 822.4,474.9 826.5,473.5 830.5,474.4 834.6,473.5 838.6,474.9 844.0,472.7 848.0,475.4 852.0,474.9 855.5,476.2 858.2,472.2 860.9,477.0 864.1,476.2 866.8,483.0 869.5,511.2 872.3,512.3 875.1,513.4 877.9,510.8 880.7,512.1 883.5,511.9 886.3,510.9 889.1,511.5 891.9,512.0 894.7,511.6 897.5,511.8 900.3,511.1 903.1,509.1 905.9,510.9 908.7,511.6 911.5,511.7 914.3,511.5 917.1,509.8 919.9,511.5 922.7,511.8 925.5,509.7 928.3,510.8 931.1,511.9 933.9,513.4 936.7,511.5 939.5,511.5 942.3,511.9 945.1,511.7 947.9,509.1 950.7,511.9 953.5,511.6 956.3,509.1 959.1,511.8 961.9,511.8 964.7,511.5 967.5,511.4 970.3,509.9 973.1,513.7 975.9,510.7 978.7,512.0 981.5,511.4 984.3,511.0 987.1,511.0 989.9,510.9 992.7,512.2 995.5,513.5 998.3,512.1 1001.1,511.1 1003.9,511.5 1006.7,509.0 1009.5,511.4 1012.3,510.9 1015.1,511.2 1017.9,510.7 1020.7,512.0 1023.5,513.6 1026.3,512.1 1029.1,511.3 1031.9,512.3 1034.7,511.3 1037.5,511.1 1040.3,509.1 1043.1,511.2 1045.9,511.1 1048.7,511.5 1051.5,513.1 1054.3,512.1 1057.1,511.7 1059.9,512.2 1062.7,511.9 1065.5,509.7 1068.3,511.9 1071.1,511.2 1073.9,509.9 1076.7,513.2 1079.5,511.2 1082.3,512.3 1085.1,511.7 1087.9,511.6 1090.7,511.0 1093.5,512.9 1096.3,511.5 1099.1,512.2 1101.9,511.4 1104.7,512.9 1107.5,509.3 1110.3,509.2 1113.1,511.6 1115.9,511.9 1118.7,511.4 1121.5,511.3 1124.3,510.8 1127.1,512.2 1129.9,513.2 1132.7,512.1 1135.5,513.0 1138.3,511.3 1141.1,512.2 1143.9,512.1 1146.7,509.0 1149.5,512.1 1152.3,511.6 1152.6,511.8" fill="none" stroke="#eab839" stroke-width="1.0" stroke-opacity="1" stroke-linejoin="round"/></svg>

<div class="yl" style="right:1138.5px;top:89.0px;font-size:11px">100%</div><div class="yl" style="right:1138.5px;top:127.0px;font-size:11px">75%</div><div class="yl" style="right:1138.5px;top:165.0px;font-size:11px">50%</div><div class="yl" style="right:1138.5px;top:203.0px;font-size:11px">25%</div><div class="yl" style="right:1138.5px;top:242.0px;font-size:11px">0%</div>
<div class="xl" style="left:56.5px;top:255.0px">19:25</div><div class="xl" style="left:141.5px;top:255.0px">19:30</div><div class="xl" style="left:227.5px;top:255.0px">19:35</div><div class="xl" style="left:312.5px;top:255.0px">19:40</div><div class="xl" style="left:398.5px;top:255.0px">19:45</div><div class="xl" style="left:483.5px;top:255.0px">19:50</div>
<div class="lm" style="left:29px;top:286px;background:#7eb26d"></div><div class="lt" style="left:51px;top:279px">User</div><div class="lm" style="left:86px;top:286px;background:#eab839"></div><div class="lt" style="left:108px;top:279px">System</div><div class="lm" style="left:159px;top:286px;background:#6ed0e0"></div><div class="lt" style="left:181px;top:279px">Iowait</div><div class="lm" style="left:224px;top:286px;background:#ef843c"></div><div class="lt" style="left:246px;top:279px">idle</div>

<div class="yl" style="right:532px;top:89.0px;font-size:12px">25 MB/s</div><div class="yl" style="right:532px;top:119.0px;font-size:12px">20 MB/s</div><div class="yl" style="right:532px;top:150.0px;font-size:12px">15 MB/s</div><div class="yl" style="right:532px;top:180.0px;font-size:12px">10 MB/s</div><div class="yl" style="right:532px;top:211.0px;font-size:12px">5 MB/s</div><div class="yl" style="right:532px;top:242.0px;font-size:12px">0 kB/s</div>
<div class="xl" style="left:662.5px;top:255.0px">19:25</div><div class="xl" style="left:745.5px;top:255.0px">19:30</div><div class="xl" style="left:827.5px;top:255.0px">19:35</div><div class="xl" style="left:910.5px;top:255.0px">19:40</div><div class="xl" style="left:993.5px;top:255.0px">19:45</div><div class="xl" style="left:1075.5px;top:255.0px">19:50</div>
<div class="lm" style="left:619px;top:286px;background:#7eb26d"></div><div class="lt" style="left:641px;top:279px">sda-w</div><div class="lm" style="left:684px;top:286px;background:#eab839"></div><div class="lt" style="left:706px;top:279px">sda-r</div>

<div class="yl" style="right:1125.5px;top:355.0px;font-size:11.3px">10 GB</div><div class="yl" style="right:1125.5px;top:393.0px;font-size:11.3px">7.50 GB</div><div class="yl" style="right:1125.5px;top:431.0px;font-size:11.3px">5 GB</div><div class="yl" style="right:1125.5px;top:469.0px;font-size:11.3px">2.50 GB</div><div class="yl" style="right:1125.5px;top:508.0px;font-size:11.3px">0 MB</div>
<div class="xl" style="left:68.5px;top:520.7px">19:25</div><div class="xl" style="left:151.5px;top:520.7px">19:30</div><div class="xl" style="left:235.5px;top:520.7px">19:35</div><div class="xl" style="left:318.5px;top:520.7px">19:40</div><div class="xl" style="left:401.5px;top:520.7px">19:45</div><div class="xl" style="left:485.5px;top:520.7px">19:50</div>
<div class="lm" style="left:29px;top:552px;background:#7eb26d"></div><div class="lt" style="left:51px;top:545px">Used</div><div class="lm" style="left:89px;top:552px;background:#eab839"></div><div class="lt" style="left:111px;top:545px">Cached</div><div class="lm" style="left:162px;top:552px;background:#6ed0e0"></div><div class="lt" style="left:184px;top:545px">Buffers</div><div class="lm" style="left:234px;top:552px;background:#ef843c"></div><div class="lt" style="left:254.5px;top:545px">Free</div>

<div class="yl" style="right:530.5px;top:355.0px;font-size:12px">3000</div><div class="yl" style="right:530.5px;top:380.0px;font-size:12px">2500</div><div class="yl" style="right:530.5px;top:406.0px;font-size:12px">2000</div><div class="yl" style="right:530.5px;top:431.0px;font-size:12px">1500</div><div class="yl" style="right:530.5px;top:457.0px;font-size:12px">1000</div><div class="yl" style="right:530.5px;top:482.0px;font-size:12px">500</div><div class="yl" style="right:530.5px;top:508.0px;font-size:12px">0</div>
<div class="yl" style="left:596.5px;top:438px;width:40px;text-align:center;transform:rotate(-90deg);font-size:13px">ops/s</div>
<div class="xl" style="left:663.5px;top:520.7px">19:25</div><div class="xl" style="left:745.5px;top:520.7px">19:30</div><div class="xl" style="left:828.5px;top:520.7px">19:35</div><div class="xl" style="left:910.5px;top:520.7px">19:40</div><div class="xl" style="left:993.5px;top:520.7px">19:45</div><div class="xl" style="left:1075.5px;top:520.7px">19:50</div>
<div class="lm" style="left:619px;top:552px;background:#7eb26d"></div><div class="lt" style="left:641px;top:545px">sda-r</div><div class="lm" style="left:679px;top:552px;background:#eab839"></div><div class="lt" style="left:701px;top:545px">sda-w</div>
</body></html>
